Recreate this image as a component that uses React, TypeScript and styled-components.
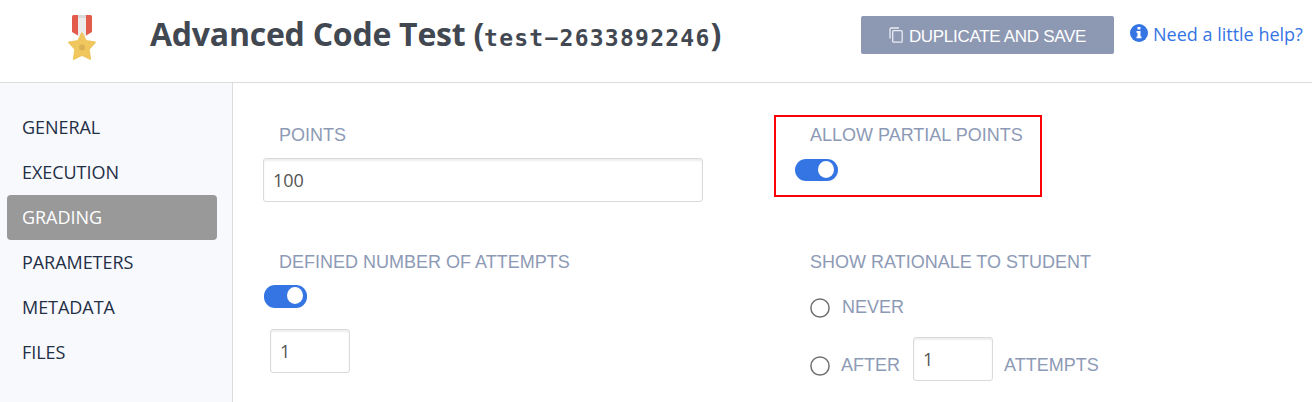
import React from "react";
import styled, { createGlobalStyle } from "styled-components";

const GlobalStyle = createGlobalStyle`
  *, *::before, *::after { box-sizing: border-box; }
  body { margin: 0; background: #fff; overflow: hidden; font-family: "Open Sans", sans-serif; }
`;

const Page = styled.div`
  width: 1312px;
  height: 402px;
  display: flex;
  flex-direction: column;
`;

const Header = styled.header`
  height: 83px;
  flex: none;
  display: flex;
  align-items: flex-start;
  border-bottom: 1px solid #dcdcdc;
`;

const Medal = styled.svg`
  flex: none;
  width: 28px;
  height: 46px;
  margin: 15px 0 0 68px;
`;

const Title = styled.h1`
  width: 711px;
  margin: 12px 0 0 54px;
  flex: none;
  font-size: 32px;
  line-height: 44px;
  font-weight: 700;
  letter-spacing: -0.24px;
  color: #424851;
  white-space: nowrap;
`;

const TestId = styled.code`
  font-family: "DejaVu Sans Mono", monospace;
  font-size: 23px;
  letter-spacing: 1.25px;
`;

const SaveButton = styled.button`
  width: 253px;
  height: 38px;
  margin: 16px 0 0;
  padding: 2px 0 0;
  flex: none;
  display: flex;
  align-items: center;
  justify-content: center;
  gap: 6px;
  border: 0;
  border-radius: 2px;
  background: #8d98b3;
  color: #fff;
  font: 17px/20px "Liberation Sans", Arial, sans-serif;
  letter-spacing: -0.3px;
  white-space: nowrap;
  span { padding-top: 1px; }
  svg { margin-top: -2px; }
`;

const HelpLink = styled.a`
  display: flex;
  gap: 5px;
  margin: 22px 0 0 16px;
  color: #3575e3;
  font-size: 18px;
  line-height: 25px;
  white-space: nowrap;
  svg { flex: none; margin-top: 2px; }
`;

const Body = styled.div`
  flex: 1;
  display: flex;
`;

const Sidebar = styled.nav`
  width: 233px;
  flex: none;
  padding: 22px 15px 0 7px;
  border-right: 1px solid #dcdcdc;
  background: #f8f9fd;
`;

const NavItem = styled.div<{ $active?: boolean }>`
  height: 45px;
  padding-left: 15px;
  border-radius: 4px;
  font-size: 18px;
  line-height: 44px;
  font-weight: ${(p) => (p.$active ? 500 : 400)};
  letter-spacing: -0.05px;
  color: ${(p) => (p.$active ? "#fff" : "#232f45")};
  background: ${(p) => (p.$active ? "#999" : "transparent")};
`;

const Form = styled.main`
  display: grid;
  grid-template-columns: 511px 1fr;
  grid-template-rows: 127px 1fr;
  padding: 32px 0 0 30px;
  flex: 1;
`;

const Field = styled.section`
  display: flex;
  flex-direction: column;
  align-items: flex-start;
`;

const HighlightedField = styled(Field)`
  width: 268px;
  height: 82px;
  border: 2px solid #fb0207;
  padding-left: 19px;
`;

const Label = styled.div<{ $indent?: number; $top?: number }>`
  padding-left: ${(p) => p.$indent ?? 0}px;
  margin-top: ${(p) => p.$top ?? 0}px;
  height: 20px;
  font: 18px/20px "Liberation Sans", Arial, sans-serif;
  color: #8d9ab6;
  white-space: nowrap;
`;

const TextInput = styled.input<{ $width: number }>`
  width: ${(p) => p.$width}px;
  height: 44px;
  flex: none;
  padding: 0 9px;
  border: 1px solid #dadada;
  border-radius: 3px;
  box-shadow: inset 0 2px 2px rgba(0, 0, 0, 0.07);
  background: #fff;
  color: #555;
  font: 18px "Open Sans", sans-serif;
  outline: none;
`;

const PointsInput = styled(TextInput)`
  margin-top: 13px;
`;

const AttemptsInput = styled(TextInput)`
  margin: 21px 0 0 7px;
`;

const Toggle = styled.div<{ $left?: number }>`
  width: 43px;
  height: 22px;
  margin: 14px 0 0 ${(p) => p.$left ?? 0}px;
  padding: 2px 4px 0;
  display: flex;
  justify-content: flex-end;
  border-radius: 11px;
  background: #3575e3;
  &::after {
    content: "";
    width: 16px;
    height: 17px;
    border-radius: 50%;
    background: #fff;
  }
`;

const TallToggle = styled(Toggle)`
  height: 23px;
  margin-top: 13px;
`;

const RadioRow = styled.div<{ $height: number; $top: number }>`
  height: ${(p) => p.$height}px;
  margin: ${(p) => p.$top}px 0 0 36px;
  display: flex;
  align-items: center;
  ${TextInput} { margin: -15px 11px 0 13px; }
`;

const RadioDot = styled.svg`
  width: 20px;
  height: 20px;
  flex: none;
`;

const Radio = () => (
  <RadioDot viewBox="0 0 20 20">
    <circle cx="10" cy="10" r="9.100" fill="#fff" stroke="#707070" strokeWidth="1.500" />
  </RadioDot>
);

const MedalIcon = () => (
  <Medal viewBox="0 0 28 46">
    <path d="M4 1.5Q4 0 5.500 0H22.500Q24 0 24 1.500V17L18 20.500H10L4 17Z" fill="#e35b4d" />
    <path d="M10 0h8v21h-8z" fill="#ececec" />
    <path d="M10 0h8v3h-8z" fill="#d9d9d9" />
    <path
      d="M14 18.200L17.900 26L27 27.500L20.800 34.200L22.200 44L14 39.900L5.800 44L7.200 34.200L1 27.500L10.100 26Z"
      fill="#f0c75e" stroke="#f0c75e" strokeWidth="1.800" strokeLinejoin="round"
    />
    <circle cx="14" cy="32.500" r="3" fill="#d9b155" />
  </Medal>
);

const CopyIcon = () => (
  <svg width="14" height="16" viewBox="0 0 14 16" fill="none" stroke="#e9ecf2" strokeWidth="1.300">
    <path d="M1 11.500V2Q1 1 2 1H10" />
    <rect x="3.700" y="3.700" width="9.500" height="11.500" rx="1" />
  </svg>
);

const InfoIcon = () => (
  <svg width="18" height="18" viewBox="0 0 18 18">
    <circle cx="9" cy="9" r="9" fill="#3575e3" />
    <path d="M7.500 3h3v2.500h-3zM6.500 7h4v5.500h1V14.300h-5V12.500h1V8.800h-1z" fill="#fff" />
  </svg>
);

const sections = ["GENERAL", "EXECUTION", "GRADING", "PARAMETERS", "METADATA", "FILES"];

export default function App() {
  return (
    <Page>
      <GlobalStyle />
      <Header>
        <MedalIcon />
        <Title>
          Advanced Code Test (<TestId>test−2633892246</TestId>)
        </Title>
        <SaveButton>
          <CopyIcon />
          <span>DUPLICATE AND SAVE</span>
        </SaveButton>
        <HelpLink>
          <InfoIcon />
          Need a little help?
        </HelpLink>
      </Header>
      <Body>
        <Sidebar>
          {sections.map((name) => (
            <NavItem key={name} $active={name === "GRADING"}>{name}</NavItem>
          ))}
        </Sidebar>
        <Form>
          <Field>
            <Label $indent={16} $top={10}>POINTS</Label>
            <PointsInput $width={440} defaultValue="100" />
          </Field>
          <HighlightedField>
            <Label $indent={15} $top={8}>ALLOW PARTIAL POINTS</Label>
            <Toggle />
          </HighlightedField>
          <Field>
            <Label $indent={16} $top={10}>DEFINED NUMBER OF ATTEMPTS</Label>
            <TallToggle $left={1} />
            <AttemptsInput $width={80} defaultValue="1" />
          </Field>
          <Field>
            <Label $indent={36} $top={10}>SHOW RATIONALE TO STUDENT</Label>
            <RadioRow $height={26} $top={23}>
              <Radio />
              <Label $indent={12} $top={-2}>NEVER</Label>
            </RadioRow>
            <RadioRow $height={44} $top={23}>
              <Radio />
              <Label $indent={11} $top={-3}>AFTER</Label>
              <TextInput $width={80} defaultValue="1" />
              <Label $top={-3}>ATTEMPTS</Label>
            </RadioRow>
          </Field>
        </Form>
      </Body>
    </Page>
  );
}
